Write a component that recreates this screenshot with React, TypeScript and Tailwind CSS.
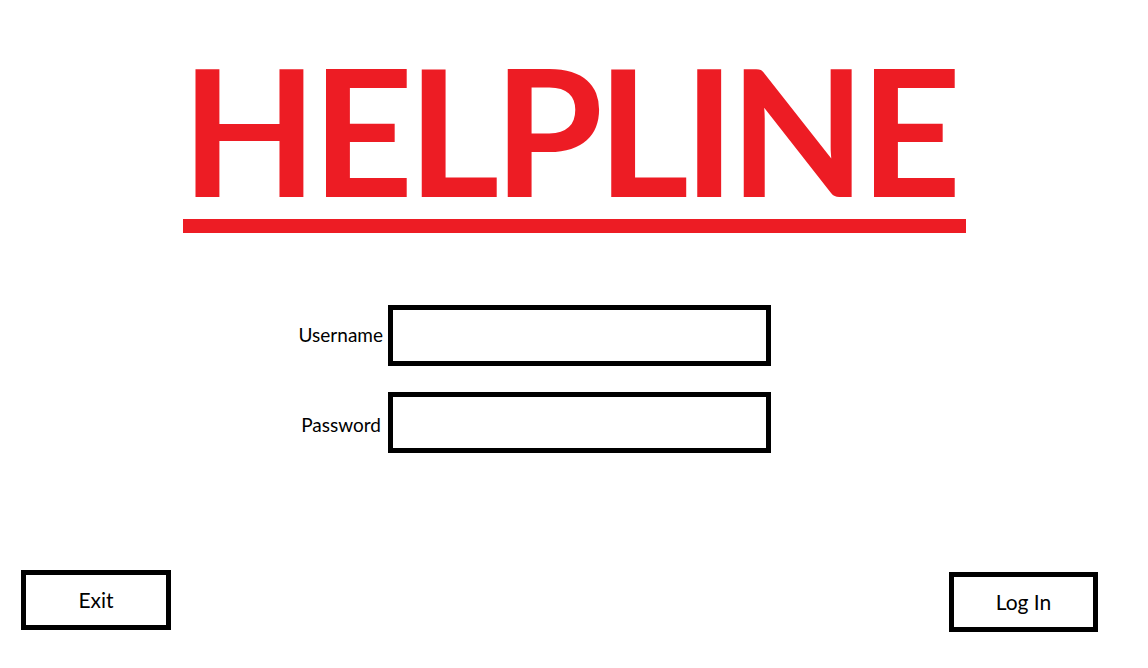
export default function App() {
  return (
    <div className="w-full h-[668px] bg-white flex flex-col font-['Lato',sans-serif] text-black overflow-hidden">
      {/* title */}
      <div className="flex flex-col items-center pt-[34px]">
        <h1 className="text-[177px] leading-[190px] font-bold text-[#ed1c24] tracking-[-6px] pr-[11px]">HELPLINE</h1>
        <div className="w-[783px] h-[14px] bg-[#ed1c24] -mt-[5px]" />
      </div>

      {/* login form */}
      <div className="flex flex-col gap-[26px] mt-[72px] pl-[285px]">
        <div className="flex items-center">
          <label className="w-[103px] pr-[5px] text-right text-[19px]">Username</label>
          <input type="text" className="w-[383px] h-[61px] border-[5px] border-black outline-none px-2" />
        </div>
        <div className="flex items-center">
          <label className="w-[103px] pr-[7px] pt-[5px] text-right text-[19px]">Password</label>
          <input type="password" className="w-[383px] h-[61px] border-[5px] border-black outline-none px-2" />
        </div>
      </div>

      {/* actions */}
      <div className="flex justify-between items-start mt-auto mb-[36px] pl-[21px] pr-[50px]">
        <button className="w-[150px] h-[60px] border-[5px] border-black text-[21px]">Exit</button>
        <button className="w-[149px] h-[60px] border-[5px] border-black text-[21px] mt-[2px]">Log In</button>
      </div>
    </div>
  );
}
